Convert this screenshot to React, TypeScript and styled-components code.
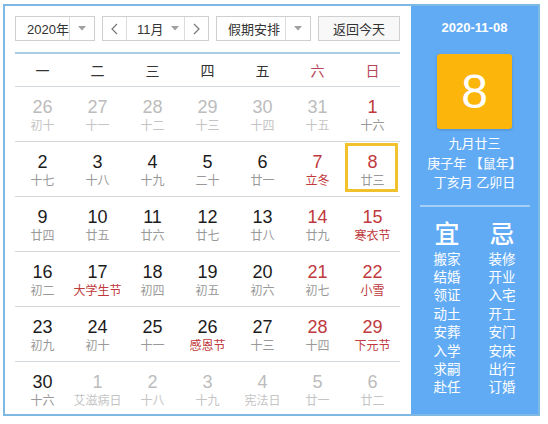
import React from 'react';
import styled, { createGlobalStyle, css } from 'styled-components';

const GlobalStyle = createGlobalStyle`
  body {
    margin: 0;
    background: #fff;
    font-family: "Liberation Sans", "Noto Sans CJK SC", sans-serif;
  }
`;

type DayKind = 'normal' | 'weekend' | 'other';

interface Day {
  num: number;
  sub: string;
  kind: DayKind;
  festival?: boolean;
  selected?: boolean;
}

const weekdays = ['一', '二', '三', '四', '五', '六', '日'];

const d = (num: number, sub: string, kind: DayKind = 'normal', festival = false, selected = false): Day => ({
  num,
  sub,
  kind,
  festival,
  selected,
});

const weeks: Day[][] = [
  [d(26, '初十', 'other'), d(27, '十一', 'other'), d(28, '十二', 'other'), d(29, '十三', 'other'), d(30, '十四', 'other'), d(31, '十五', 'other'), d(1, '十六', 'weekend')],
  [d(2, '十七'), d(3, '十八'), d(4, '十九'), d(5, '二十'), d(6, '廿一'), d(7, '立冬', 'weekend', true), d(8, '廿三', 'weekend', false, true)],
  [d(9, '廿四'), d(10, '廿五'), d(11, '廿六'), d(12, '廿七'), d(13, '廿八'), d(14, '廿九', 'weekend'), d(15, '寒衣节', 'weekend', true)],
  [d(16, '初二'), d(17, '大学生节', 'normal', true), d(18, '初四'), d(19, '初五'), d(20, '初六'), d(21, '初七', 'weekend'), d(22, '小雪', 'weekend', true)],
  [d(23, '初九'), d(24, '初十'), d(25, '十一'), d(26, '感恩节', 'normal', true), d(27, '十三'), d(28, '十四', 'weekend'), d(29, '下元节', 'weekend', true)],
  [d(30, '十六'), d(1, '艾滋病日', 'other'), d(2, '十八', 'other'), d(3, '十九', 'other'), d(4, '宪法日', 'other'), d(5, '廿一', 'other'), d(6, '廿二', 'other')],
];

const yi = ['搬家', '结婚', '领证', '动土', '安葬', '入学', '求嗣', '赴任'];
const ji = ['装修', '开业', '入宅', '开工', '安门', '安床', '出行', '订婚'];

const Frame = styled.div`
  margin: 4px 0 0 3px;
  width: 537px;
  height: 412px;
  box-sizing: border-box;
  border: 2px solid #7db9e3;
  display: flex;
  overflow: hidden;
`;

const Main = styled.div`
  width: 406px;
  background: #fff;
  padding: 10px 11px 0 10px;
  box-sizing: border-box;
`;

const Toolbar = styled.div`
  display: flex;
  gap: 7px;
  height: 25px;
`;

const Box = styled.div<{ $w: number }>`
  width: ${(p) => p.$w}px;
  height: 25px;
  box-sizing: border-box;
  border: 1px solid #cfcfcf;
  background: #fff;
  display: flex;
  align-items: stretch;
  font-size: 13px;
  color: #333;
`;

const Label = styled.div<{ $pad?: number }>`
  flex: 1;
  display: flex;
  align-items: center;
  white-space: nowrap;
  padding-left: ${(p) => p.$pad ?? 11}px;
`;

const ArrowCell = styled.div<{ $w?: number; $left?: boolean; $right?: boolean }>`
  width: ${(p) => p.$w ?? 24}px;
  flex: none;
  display: flex;
  align-items: center;
  justify-content: center;
  ${(p) => p.$left && css`border-left: 1px solid #dcdcdc;`}
  ${(p) => p.$right && css`border-right: 1px solid #dcdcdc;`}
`;

const TodayButton = styled.div`
  width: 82px;
  height: 25px;
  box-sizing: border-box;
  border: 1px solid #cfcfcf;
  background: #f8f8f8;
  display: flex;
  align-items: center;
  justify-content: center;
  font-size: 13px;
  color: #333;
`;

const Caret = () => (
  <svg width="8" height="5" viewBox="0 0 8 5">
    <path d="M0 0H8L4 4.5Z" fill="#a0a0a0" />
  </svg>
);

const Chevron = ({ dir }: { dir: 'left' | 'right' }) => (
  <svg width="7" height="12" viewBox="0 0 7 12">
    <path
      d={dir === 'left' ? 'M6 1L1 6l5 5' : 'M1 1l5 5-5 5'}
      fill="none"
      stroke="#777"
      strokeWidth="1.2"
    />
  </svg>
);

const HeaderLine = styled.div`
  margin-top: 11px;
  height: 2px;
  background: #a9cde4;
`;

const WeekHeader = styled.div`
  display: grid;
  grid-template-columns: repeat(7, 55px);
  height: 32px;
  align-items: center;
  border-bottom: 1px solid #d3d9dd;
`;

const WeekName = styled.div<{ $red?: boolean }>`
  text-align: center;
  font-size: 14px;
  color: ${(p) => (p.$red ? '#b8465a' : '#333')};
`;

const WeekRow = styled.div<{ $last?: boolean }>`
  display: grid;
  grid-template-columns: repeat(7, 55px);
  height: 54px;
  border-bottom: ${(p) => (p.$last ? 'none' : '1px solid #d3d9dd')};
`;

const Cell = styled.div<{ $selected?: boolean }>`
  position: relative;
  display: flex;
  flex-direction: column;
  align-items: center;
  padding-top: 9px;
  box-sizing: border-box;
  ${(p) =>
    p.$selected &&
    css`
      &::after {
        content: '';
        position: absolute;
        left: 0;
        right: 2px;
        top: 1px;
        bottom: 4px;
        border: 3px solid #f2c12e;
      }
    `}
`;

const Num = styled.div<{ $kind: DayKind }>`
  font-size: 18px;
  line-height: 22px;
  color: ${(p) => (p.$kind === 'other' ? '#bcbcbc' : p.$kind === 'weekend' ? '#c0393d' : '#1c1c1c')};
`;

const Sub = styled.div<{ $kind: DayKind; $festival?: boolean }>`
  font-size: 12px;
  line-height: 16px;
  white-space: nowrap;
  color: ${(p) => (p.$kind === 'other' ? '#c4c4c4' : p.$festival ? '#c0393d' : '#999')};
`;

const Side = styled.div`
  flex: 1;
  background: #61abf5;
  color: #fff;
  display: flex;
  flex-direction: column;
  align-items: center;
  padding-top: 13px;
`;

const DateText = styled.div`
  font-size: 13px;
  font-weight: bold;
  line-height: 18px;
`;

const BigDay = styled.div`
  margin-top: 17px;
  width: 75px;
  height: 75px;
  background: #fbb50b;
  border-radius: 3px;
  box-shadow: 0 1px 3px rgba(0, 0, 0, 0.18);
  display: flex;
  align-items: center;
  justify-content: center;
  font-size: 48px;
  line-height: 1;
`;

const Lunar = styled.div`
  margin-top: 5px;
  font-size: 13px;
  line-height: 19.5px;
  text-align: center;
  white-space: nowrap;
`;

const Divider = styled.div`
  margin-top: 12px;
  width: 110px;
  height: 2px;
  background: #a6cff8;
`;

const Advice = styled.div`
  margin-top: 12px;
  display: grid;
  grid-template-columns: 55px 55px;
`;

const AdviceCol = styled.div`
  display: flex;
  flex-direction: column;
  align-items: center;
`;

const AdviceHead = styled.div`
  font-size: 25px;
  font-weight: 500;
  line-height: 30px;
  margin-bottom: 2px;
`;

const AdviceItem = styled.div`
  font-size: 13.5px;
  line-height: 18.4px;
`;

export default function App() {
  return (
    <>
      <GlobalStyle />
      <Frame>
        <Main>
          <Toolbar>
            <Box $w={80}>
              <Label>2020年</Label>
              <ArrowCell $left>
                <Caret />
              </ArrowCell>
            </Box>
            <Box $w={107}>
              <ArrowCell $w={23} $right>
                <Chevron dir="left" />
              </ArrowCell>
              <Label $pad={10}>11月</Label>
              <ArrowCell $w={18}>
                <Caret />
              </ArrowCell>
              <ArrowCell $w={23} $left>
                <Chevron dir="right" />
              </ArrowCell>
            </Box>
            <Box $w={95}>
              <Label>假期安排</Label>
              <ArrowCell $left>
                <Caret />
              </ArrowCell>
            </Box>
            <TodayButton>返回今天</TodayButton>
          </Toolbar>
          <HeaderLine />
          <WeekHeader>
            {weekdays.map((w, i) => (
              <WeekName key={w} $red={i >= 5}>
                {w}
              </WeekName>
            ))}
          </WeekHeader>
          {weeks.map((week, wi) => (
            <WeekRow key={wi} $last={wi === weeks.length - 1}>
              {week.map((day, di) => (
                <Cell key={di} $selected={day.selected}>
                  <Num $kind={day.kind}>{day.num}</Num>
                  <Sub $kind={day.kind} $festival={day.festival}>
                    {day.sub}
                  </Sub>
                </Cell>
              ))}
            </WeekRow>
          ))}
        </Main>
        <Side>
          <DateText>2020-11-08</DateText>
          <BigDay>8</BigDay>
          <Lunar>
            九月廿三
            <br />
            庚子年 【鼠年】
            <br />
            丁亥月 乙卯日
          </Lunar>
          <Divider />
          <Advice>
            <AdviceCol>
              <AdviceHead>宜</AdviceHead>
              {yi.map((t) => (
                <AdviceItem key={t}>{t}</AdviceItem>
              ))}
            </AdviceCol>
            <AdviceCol>
              <AdviceHead>忌</AdviceHead>
              {ji.map((t) => (
                <AdviceItem key={t}>{t}</AdviceItem>
              ))}
            </AdviceCol>
          </Advice>
        </Side>
      </Frame>
    </>
  );
}
